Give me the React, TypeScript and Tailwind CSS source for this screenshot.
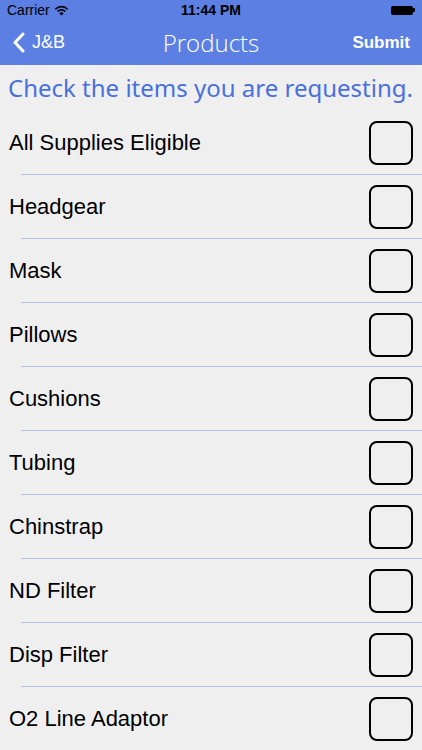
const ITEMS = [
  'All Supplies Eligible',
  'Headgear',
  'Mask',
  'Pillows',
  'Cushions',
  'Tubing',
  'Chinstrap',
  'ND Filter',
  'Disp Filter',
  'O2 Line Adaptor',
];

export default function App() {
  return (
    <div className="w-[422px] h-[750px] overflow-hidden bg-[#efefef] font-['Liberation_Sans',sans-serif]">
      <div className="bg-[#5b7fe2]">
        <div className="h-[20px] flex items-center justify-between px-[7px] text-[14px] text-black relative">
          <div className="flex items-center gap-[4px]">
            <span>Carrier</span>
            <svg width="15" height="11" viewBox="0 0 15 11">
              <path d="M7.5 10.5 L5.3 8.2 A3.2 3.2 0 0 1 9.7 8.2 Z" fill="black" />
              <path d="M3.6 6.5 A5.6 5.6 0 0 1 11.4 6.5" stroke="black" strokeWidth="1.6" fill="none" />
              <path d="M1.3 4.2 A8.8 8.8 0 0 1 13.7 4.2" stroke="black" strokeWidth="1.6" fill="none" />
            </svg>
          </div>
          <span className="absolute left-1/2 -translate-x-1/2 font-bold">11:44 PM</span>
          <div className="flex items-center">
            <div className="w-[22px] h-[9px] bg-black rounded-[2px]" />
            <div className="w-[2px] h-[4px] bg-black rounded-r-[1px]" />
          </div>
        </div>
        <div className="h-[45px] flex items-center justify-between px-[12px] relative text-white">
          <div className="flex items-center gap-[7px]">
            <svg width="13" height="21" viewBox="0 0 13 21">
              <path d="M11 2 L3 10.5 L11 19" stroke="white" strokeWidth="3" fill="none" strokeLinecap="round" strokeLinejoin="round" />
            </svg>
            <span className="text-[18px]">J&amp;B</span>
          </div>
          <span className="absolute left-1/2 -translate-x-1/2 text-[24px] font-light font-['Open_Sans',sans-serif]">Products</span>
          <span className="text-[17px] font-bold">Submit</span>
        </div>
      </div>
      <div className="h-[46px] flex items-center px-[8px] text-[24px] text-[#4a70dc] font-['Noto_Sans',sans-serif]">
        Check the items you are requesting.
      </div>
      <div>
        {ITEMS.map((item) => (
          <div key={item}>
            <div className="h-[63px] flex items-center justify-between px-[9px]">
              <span className="text-[22px] text-black">{item}</span>
              <div className="w-[44px] h-[44px] border-2 border-black rounded-[8px]" />
            </div>
            <div className="ml-[21px] h-px bg-[#b9c4ec]" />
          </div>
        ))}
      </div>
    </div>
  );
}
